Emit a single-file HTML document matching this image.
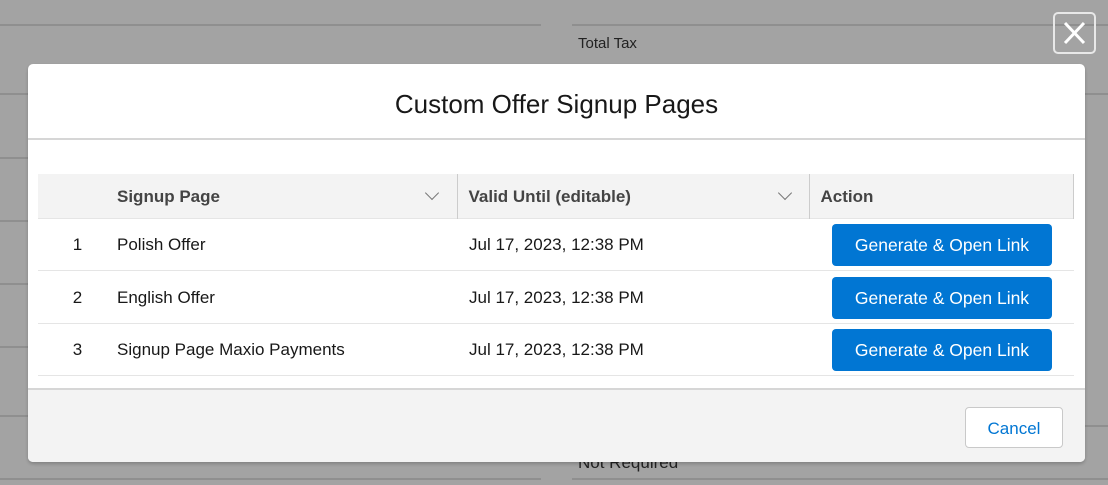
<!DOCTYPE html><html><head><style>
*{box-sizing:border-box;margin:0;padding:0}
body{width:1108px;height:485px;background:#a3a3a3;position:relative;overflow:hidden;font-family:"Liberation Sans",Arial,sans-serif}
.l{position:absolute;height:2px;background:#8f8f8f}
.modal{position:absolute;left:28px;top:64px;width:1057px;height:398px;background:#fff;border-radius:5px;overflow:hidden;box-shadow:0 2px 3px rgba(0,0,0,.2)}
.hd{height:76px;border-bottom:2px solid #d6d6d6;text-align:center;font-size:26px;line-height:80px;color:#181818}
.foot{position:absolute;left:0;right:0;top:324px;bottom:0;background:#f3f3f3;border-top:2px solid #d6d6d6}
.cancel{position:absolute;left:937px;top:17px;width:98px;height:41px;border:1px solid #c9c9c9;border-radius:4px;background:#fff;color:#0176d3;font-size:17px;text-align:center;line-height:41px}
table{position:absolute;left:10px;top:110px;width:1036px;border-collapse:collapse;font-size:17px;color:#181818}
th{background:#f3f3f3;height:44px;text-align:left;font-weight:bold;color:#444;position:relative;padding-top:2px}
td{height:52.5px;border-top:1px solid #e5e5e5;padding-top:2px}
tr:last-child td{border-bottom:1px solid #e5e5e5}
.btn{display:inline-block;width:220px;height:42px;background:#0176d3;border-radius:4px;color:#fff;text-align:center;line-height:42px;font-size:17.5px}
.chev{position:absolute;top:14px;width:10px;height:10px;border-right:1.5px solid #777;border-bottom:1.5px solid #777;transform:rotate(45deg)}
</style></head><body>
<div class="l" style="left:0;top:24px;width:541px"></div>
<div class="l" style="left:572px;top:24px;width:536px"></div>
<div class="l" style="left:0;top:93px;width:30px"></div>
<div class="l" style="left:0;top:157px;width:30px"></div>
<div class="l" style="left:0;top:220px;width:30px"></div>
<div class="l" style="left:0;top:283px;width:30px"></div>
<div class="l" style="left:0;top:346px;width:30px"></div>
<div class="l" style="left:0;top:415px;width:30px"></div>
<div class="l" style="left:1085px;top:93px;width:23px"></div>
<div class="l" style="left:1085px;top:425px;width:23px"></div>
<div class="l" style="left:0;top:478px;width:541px"></div>
<div class="l" style="left:572px;top:478px;width:536px"></div>
<div style="position:absolute;left:578px;top:35px;font-size:15px;color:#222">Total Tax</div>
<div style="position:absolute;left:578px;top:453px;font-size:17px;color:#222">Not Required</div>
<div style="position:absolute;left:1053px;top:12px;width:43px;height:42px;border:2px solid #e8e8e8;border-radius:5px">
<svg width="39" height="38" viewBox="0 0 39 38"><path d="M10 9L29 29M29 9L10 29" stroke="#fff" stroke-width="3"/></svg></div>
<div class="modal">
<div class="hd">Custom Offer Signup Pages</div>
<table>
<tr><th style="width:79px"></th><th style="width:340px">Signup Page<span class="chev" style="left:310px"></span></th>
<th style="width:352px;border-left:1px solid #ccc;padding-left:11px">Valid Until (editable)<span class="chev" style="left:322px"></span></th>
<th style="border-left:1px solid #ccc;border-right:1px solid #ccc;padding-left:11px">Action</th></tr>
<tr><td style="text-align:center">1</td><td>Polish Offer</td><td style="padding-left:12px">Jul 17, 2023, 12:38 PM</td><td style="padding-left:23px"><span class="btn">Generate &amp; Open Link</span></td></tr>
<tr><td style="text-align:center">2</td><td>English Offer</td><td style="padding-left:12px">Jul 17, 2023, 12:38 PM</td><td style="padding-left:23px"><span class="btn">Generate &amp; Open Link</span></td></tr>
<tr><td style="text-align:center">3</td><td>Signup Page Maxio Payments</td><td style="padding-left:12px">Jul 17, 2023, 12:38 PM</td><td style="padding-left:23px"><span class="btn">Generate &amp; Open Link</span></td></tr>
</table>
<div class="foot"><div class="cancel">Cancel</div></div>
</div>
</body></html>
